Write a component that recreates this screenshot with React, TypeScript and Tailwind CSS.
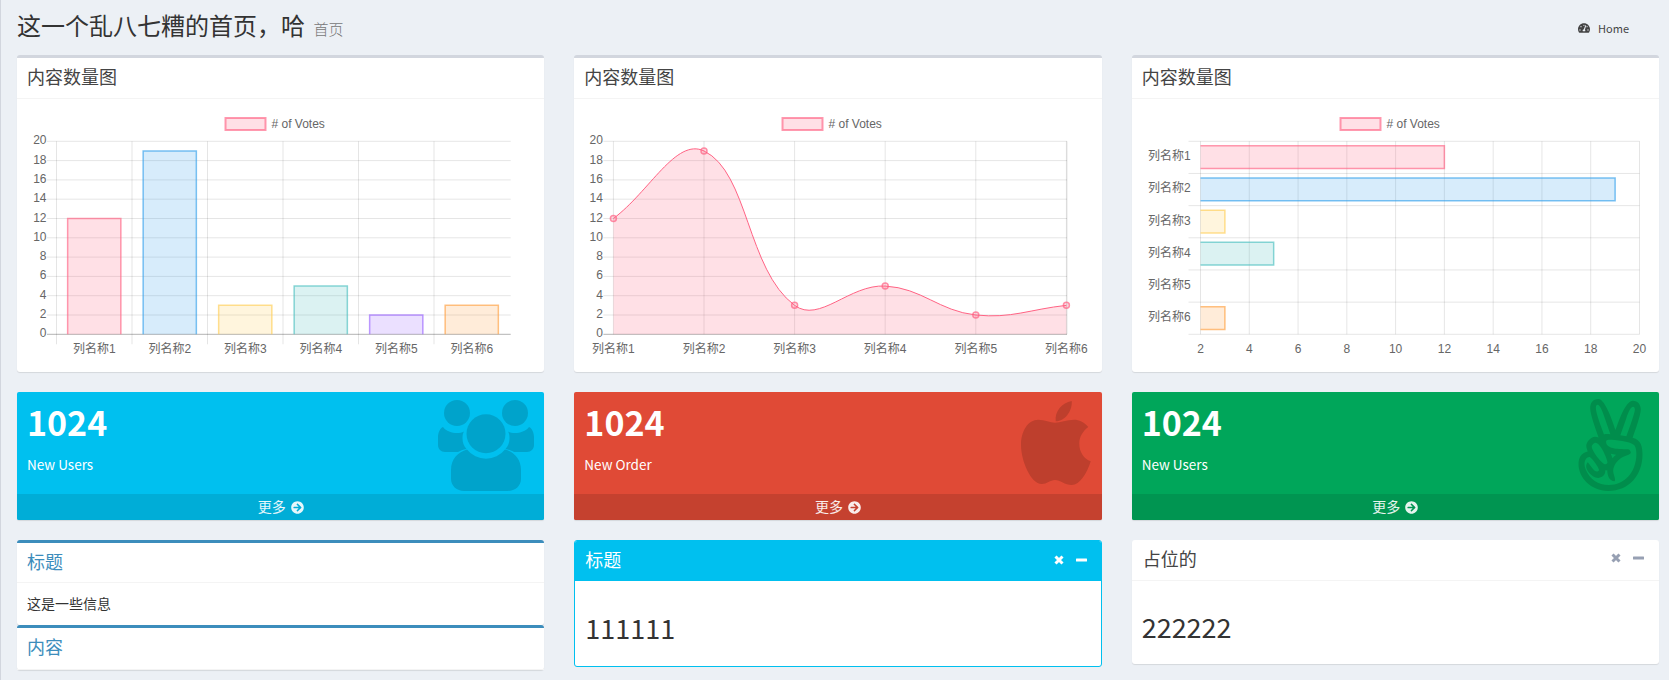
import React from 'react';
import { FaAngellist, FaArrowCircleRight, FaTachometerAlt } from 'react-icons/fa';

const LABELS = ['列名称1', '列名称2', '列名称3', '列名称4', '列名称5', '列名称6'];
const VALUES = [12, 19, 3, 5, 2, 3];
const FILLS = [
  'rgba(255,99,132,.2)',
  'rgba(54,162,235,.2)',
  'rgba(255,206,86,.2)',
  'rgba(75,192,192,.2)',
  'rgba(153,102,255,.2)',
  'rgba(255,159,64,.2)',
];
const STROKES = [
  'rgba(255,99,132,.65)',
  'rgba(54,162,235,.65)',
  'rgba(255,206,86,.65)',
  'rgba(75,192,192,.65)',
  'rgba(153,102,255,.65)',
  'rgba(255,159,64,.65)',
];
const GRID = 'rgba(0,0,0,.1)';
const TICK_TEXT = '#666';
const CHART_FONT = '"Liberation Sans", "Noto Sans CJK SC", sans-serif';

const TOP = 42.3;
const BOTTOM = 235.3;
const Y_TICKS = [20, 18, 16, 14, 12, 10, 8, 6, 4, 2, 0];
const valueY = (v: number) => BOTTOM - (v / 20) * (BOTTOM - TOP);

function ChartFrame({ children }: { children: React.ReactNode }) {
  return (
    <svg width="100%" height="273" className="block" style={{ fontFamily: CHART_FONT }} fontSize="12" fill={TICK_TEXT}>
      <rect x="208.5" y="19" width="40" height="12" fill={FILLS[0]} stroke={STROKES[0]} strokeWidth="2" />
      <text x="254.5" y="28.5">
        # of Votes
      </text>
      {children}
    </svg>
  );
}

function ValueGrid({ left, right }: { left: number; right: number }) {
  return (
    <>
      {Y_TICKS.map((v) => (
        <g key={v}>
          <line x1={left - 10} x2={right} y1={valueY(v)} y2={valueY(v)} stroke={v === 0 ? 'rgba(0,0,0,.3)' : GRID} />
          <text x={left - 10.5} y={valueY(v) + 3} textAnchor="end">
            {v}
          </text>
        </g>
      ))}
    </>
  );
}

function BarChart() {
  const left = 39.5;
  const step = 75.5;
  return (
    <ChartFrame>
      <ValueGrid left={40} right={493.7} />
      {LABELS.map((label, i) => {
        const x = left + step * i;
        const mid = x + step / 2;
        const y = valueY(VALUES[i]);
        return (
          <g key={label}>
            <line x1={x} x2={x} y1={TOP} y2={BOTTOM + 10} stroke={GRID} />
            <rect x={mid - 26.6} y={y} width={53.2} height={BOTTOM - y} fill={FILLS[i]} />
            <path
              d={`M${mid - 26.6} ${BOTTOM}V${y}H${mid + 26.6}V${BOTTOM}`}
              fill="none"
              stroke={STROKES[i]}
              strokeWidth="1.5"
            />
            <text x={mid} y={253.5} textAnchor="middle">
              {label}
            </text>
          </g>
        );
      })}
    </ChartFrame>
  );
}

// same control points as chart.js line tension .4
function curvePath(pts: number[][]) {
  const controls = pts.map((cur, i) => {
    const prev = pts[i - 1] || cur;
    const next = pts[i + 1] || cur;
    const d01 = Math.hypot(cur[0] - prev[0], cur[1] - prev[1]);
    const d12 = Math.hypot(next[0] - cur[0], next[1] - cur[1]);
    const s01 = d01 / (d01 + d12);
    const s12 = d12 / (d01 + d12);
    return {
      before: [cur[0] - 0.4 * s01 * (next[0] - prev[0]), cur[1] - 0.4 * s01 * (next[1] - prev[1])],
      after: [cur[0] + 0.4 * s12 * (next[0] - prev[0]), cur[1] + 0.4 * s12 * (next[1] - prev[1])],
    };
  });
  let d = `M${pts[0][0]} ${pts[0][1]}`;
  for (let i = 1; i < pts.length; i++) {
    const a = controls[i - 1].after;
    const b = controls[i].before;
    d += `C${a[0]} ${a[1]} ${b[0]} ${b[1]} ${pts[i][0]} ${pts[i][1]}`;
  }
  return d;
}

function LineChart() {
  const left = 39.4;
  const step = 90.6;
  const pts = VALUES.map((v, i) => [left + step * i, valueY(v)]);
  const line = curvePath(pts);
  return (
    <ChartFrame>
      <ValueGrid left={left} right={493} />
      {LABELS.map((label, i) => {
        const x = left + step * i;
        return (
          <g key={label}>
            <line x1={x} x2={x} y1={TOP} y2={BOTTOM} stroke={GRID} />
            <text x={x} y={253.5} textAnchor="middle">
              {label}
            </text>
          </g>
        );
      })}
      <line x1={493} x2={493} y1={TOP} y2={BOTTOM} stroke={GRID} />
      <path d={`${line}L${pts[5][0]} ${BOTTOM}L${left} ${BOTTOM}Z`} fill={FILLS[0]} />
      <path d={line} fill="none" stroke="rgba(255,99,132,1)" />
      {pts.map((p, i) => (
        <circle key={i} cx={p[0]} cy={p[1]} r="3" fill={FILLS[0]} stroke="rgba(255,99,132,.7)" strokeWidth="1.5" />
      ))}
    </ChartFrame>
  );
}

function HorizontalChart() {
  const left = 68.5;
  const right = 507.5;
  const band = (BOTTOM - TOP) / 6;
  const valueX = (v: number) => left + ((v - 2) / 18) * (right - left);
  return (
    <ChartFrame>
      {[0, 1, 2, 3, 4, 5, 6].map((i) => (
        <line key={i} x1={left - 12} x2={right} y1={TOP + band * i} y2={TOP + band * i} stroke={GRID} />
      ))}
      {[2, 4, 6, 8, 10, 12, 14, 16, 18, 20].map((v) => (
        <g key={v}>
          <line x1={valueX(v)} x2={valueX(v)} y1={TOP} y2={BOTTOM} stroke={GRID} />
          <text x={valueX(v)} y={253.5} textAnchor="middle">
            {v}
          </text>
        </g>
      ))}
      {LABELS.map((label, i) => {
        const y = TOP + band * i + 4.5;
        const end = valueX(VALUES[i]);
        return (
          <g key={label}>
            <rect x={left} y={y} width={end - left} height={22.8} fill={FILLS[i]} />
            {VALUES[i] > 2 && (
              <path
                d={`M${left} ${y}H${end}V${y + 22.8}H${left}`}
                fill="none"
                stroke={STROKES[i]}
                strokeWidth="1.5"
              />
            )}
            <text x={16} y={TOP + band * i + 19}>
              {label}
            </text>
          </g>
        );
      })}
    </ChartFrame>
  );
}

function ChartBox({ children }: { children: React.ReactNode }) {
  return (
    <div className="bg-white rounded-[3px] border-t-[3px] border-[#d2d6de] shadow-[0_1px_1px_rgba(0,0,0,0.1)]">
      <div className="h-[41px] px-[10px] pb-[4px] flex items-center border-b border-[#f4f4f4] text-[18px] text-[#444]">内容数量图</div>
      {children}
    </div>
  );
}

function UsersIcon() {
  return (
    <svg width="96" height="91" viewBox="0 0 96 91" fill="currentColor">
      <circle cx="19" cy="13" r="13" />
      <circle cx="77" cy="13" r="13" />
      <circle cx="48" cy="33.700" r="19.500" />
      <path d="M5 27C8 31 14 33 19 33C21.500 33 24 32.500 26 31.500C25 33 24.500 35 24.500 38C24.500 43 26 46 28.500 49C25 49.500 22 51 20 52H7C3 52 0 49 0 45V37C0 33 2 28 5 27Z" />
      <path d="M91 27C88 31 82 33 77 33C74.500 33 72 32.500 70 31.500C71 33 71.500 35 71.500 38C71.500 43 70 46 67.500 49C71 49.500 74 51 76 52H89C93 52 96 49 96 45V37C96 33 94 28 91 27Z" />
      <path d="M29 49.500A24.200 24.200 0 0 0 67 49.500C76 52 83 59 83 70V79C83 86 77 91 70 91H26C19 91 13 86 13 79V70C13 59 20 52 29 49.500Z" />
    </svg>
  );
}

function AppleIcon() {
  return (
    <svg width="70" height="84" viewBox="0 0 70 84" fill="currentColor">
      <path d="M50.700 0C51.500 10 44 20 34.700 20.300C33.500 10 41 2 50.700 0Z" />
      <path d="M34 21.700C29 21.700 24 18.700 17.300 18.700C7 18.700 0 30 0 44C0 60 10 83 20.700 83C26 83 29 79 34 79C39 79 44 84 50.700 84C59 84 66 72 69.700 60.300C63 58 58.300 51 58.300 42.700C58.300 35.500 62 30 67.300 26C63 21 58 18.700 53 18.700C46 18.700 39 21.700 34 21.700Z" />
    </svg>
  );
}

function StatBox({
  bg,
  foot,
  iconColor,
  iconPlace,
  label,
  icon,
}: {
  bg: string;
  foot: string;
  iconColor: string;
  iconPlace: string;
  label: string;
  icon: React.ReactNode;
}) {
  return (
    <div className={`${bg} relative h-[128px] rounded-[2px] overflow-hidden shadow-[0_1px_1px_rgba(0,0,0,0.1)] text-white`}>
      <div className="h-[102px] p-[10px]">
        <h3 className="text-[34px] font-bold leading-[41px] -mt-[1px] mb-[12px] whitespace-nowrap">1024</h3>
        <p className="text-[13.500px] leading-[20px]">{label}</p>
      </div>
      <div className={`${iconColor} ${iconPlace} absolute`}>{icon}</div>
      <div className={`${foot} h-[26px] pb-[2px] flex items-center justify-center gap-[5px] text-[14px] text-white/90`}>
        更多 <FaArrowCircleRight className="w-[13px] h-[13px] mt-[2px]" />
      </div>
    </div>
  );
}

function ToolIcons({ color }: { color: string }) {
  return (
    <div className={`${color} flex items-center gap-[12px]`}>
      <svg width="10" height="10" viewBox="0 0 10 10" fill="none" stroke="currentColor" strokeWidth="3">
        <path d="M1.500 1.500L8.500 8.500M8.500 1.500L1.500 8.500" />
      </svg>
      <svg width="11" height="10" viewBox="0 0 11 10" fill="currentColor">
        <rect x="0" y="3.500" width="11" height="3" rx="0.500" />
      </svg>
    </div>
  );
}

export default function App() {
  return (
    <div
      className="h-[680px] overflow-hidden bg-[#ecf0f5] border-l border-[#d2d6de] pl-[16px] pr-[10px] text-[#333]"
      style={{ fontFamily: '"Noto Sans CJK SC", "Noto Sans", sans-serif' }}
    >
      <div className="h-[55px] flex items-center justify-between pt-[1px] pb-[2px]">
        <h1 className="text-[24px] leading-[24px] text-[#333]">
          这一个乱八七糟的首页，哈 <small className="text-[15px] text-[#777] font-light ml-[3px]">首页</small>
        </h1>
        <div className="flex items-center gap-[8px] pr-[30px] text-[11px] text-[#444] pt-[2px]">
          <FaTachometerAlt className="w-[12px] h-[12px]" />
          Home
        </div>
      </div>

      <div className="grid grid-cols-3 gap-x-[30px]">
        <ChartBox>
          <BarChart />
        </ChartBox>
        <ChartBox>
          <LineChart />
        </ChartBox>
        <ChartBox>
          <HorizontalChart />
        </ChartBox>
      </div>

      <div className="grid grid-cols-3 gap-x-[30px] mt-[20px]">
        <StatBox
          bg="bg-[#00c0ef]"
          foot="bg-[#00add7]"
          iconColor="text-[#00a3cb]"
          iconPlace="top-[8px] right-[10px]"
          label="New Users"
          icon={<UsersIcon />}
        />
        <StatBox
          bg="bg-[#e04a36]"
          foot="bg-[#c5412f]"
          iconColor="text-[#be3f2d]"
          iconPlace="top-[9px] right-[11px]"
          label="New Order"
          icon={<AppleIcon />}
        />
        <StatBox
          bg="bg-[#00a65a]"
          foot="bg-[#009551]"
          iconColor="text-[#008d4c]"
          iconPlace="top-[7px] right-[8px]"
          label="New Users"
          icon={<FaAngellist className="w-[81px] h-[92px]" />}
        />
      </div>

      <div className="grid grid-cols-3 gap-x-[30px] mt-[20px] items-start">
        <div>
          <div className="bg-white rounded-[3px] border-t-[3px] border-[#3c8dbc] shadow-[0_1px_1px_rgba(0,0,0,0.1)]">
            <div className="h-[40px] px-[10px] pb-[2px] flex items-center border-b border-[#f4f4f4] text-[18px] text-[#3c8dbc]">标题</div>
            <div className="h-[42px] px-[10px] pb-[2px] flex items-center text-[14px] text-[#333]">这是一些信息</div>
          </div>
          <div className="bg-white rounded-[3px] border-t-[3px] border-[#3c8dbc] shadow-[0_1px_1px_rgba(0,0,0,0.1)]">
            <div className="h-[42px] px-[10px] pb-[4px] flex items-center border-b border-[#f4f4f4] text-[18px] text-[#3c8dbc]">内容</div>
          </div>
        </div>

        <div className="rounded-[3px] border border-[#00c0ef] bg-white overflow-hidden">
          <div className="h-[41px] -mx-px -mt-px bg-[#00c0ef] pl-[11px] pr-[15px] pb-[2px] flex items-center justify-between text-[18px] text-white">
            标题
            <ToolIcons color="text-white" />
          </div>
          <div className="h-[85px] px-[10px] flex items-center pt-[10px] text-[27px] text-[#333]">111111</div>
        </div>

        <div className="rounded-[3px] bg-white shadow-[0_1px_1px_rgba(0,0,0,0.1)]">
          <div className="h-[41px] pl-[11px] pr-[15px] pb-[4px] flex items-center justify-between border-b border-[#f4f4f4] text-[18px] text-[#444]">
            占位的
            <ToolIcons color="text-[#97a0b3]" />
          </div>
          <div className="h-[83px] px-[10px] flex items-center pt-[10px] text-[27px] text-[#333]">222222</div>
        </div>
      </div>
    </div>
  );
}
